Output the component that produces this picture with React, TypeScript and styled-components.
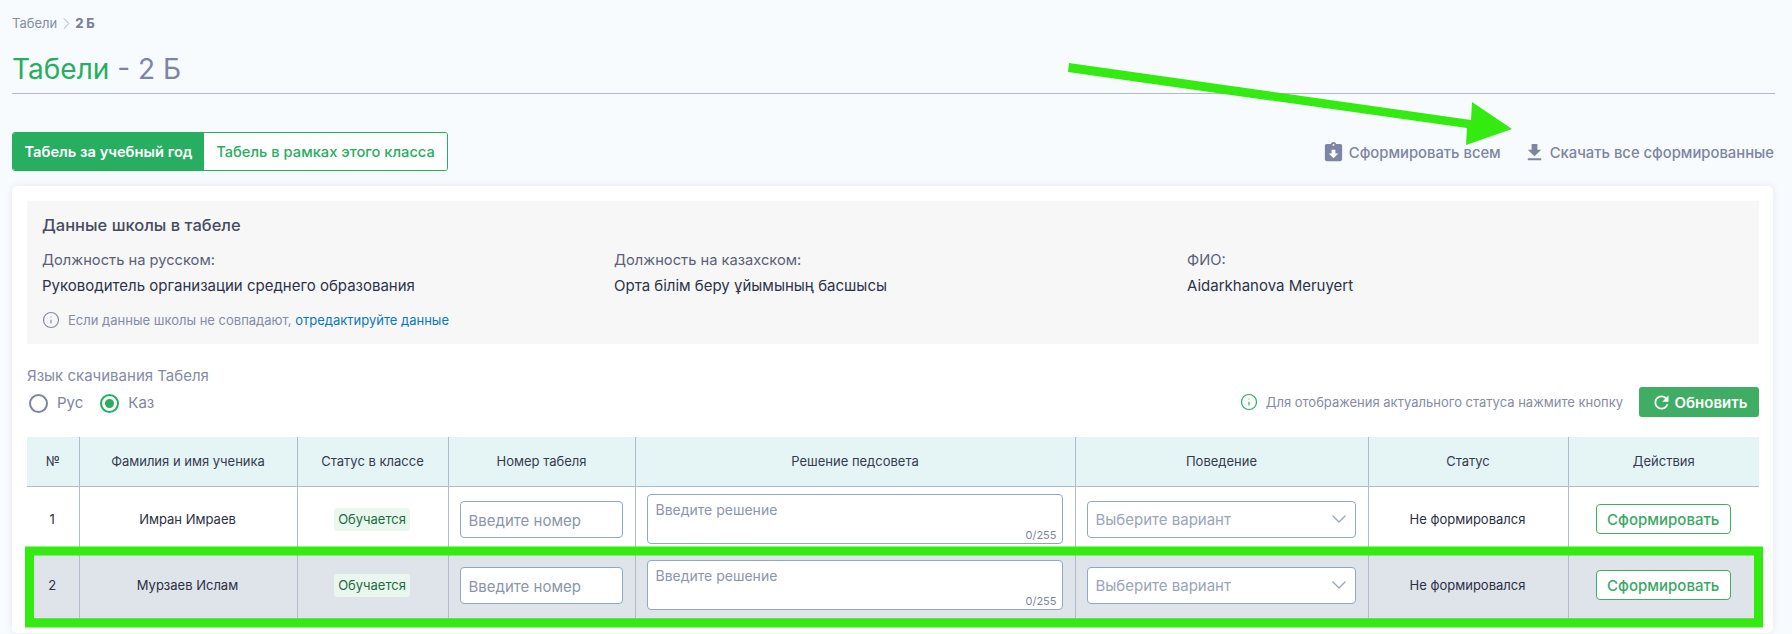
import React, { FC } from "react";
import styled, { createGlobalStyle } from "styled-components";
import { MdAssignmentReturned, MdFileDownload, MdRefresh } from "react-icons/md";
import { FiChevronDown, FiChevronRight, FiInfo } from "react-icons/fi";

const GlobalStyle = createGlobalStyle`
  * { box-sizing: border-box; }
  html, body { margin: 0; padding: 0; height: 634px; overflow: hidden; background: #f7fbfe; }
  body { font-family: Inter, "Noto Sans", sans-serif; color: #2b3044; }
`;

const Page = styled.div`
  position: relative;
  width: 1792px;
  height: 634px;
  padding: 16px 17px 0 12px;
  overflow: hidden;
`;

const Breadcrumbs = styled.div`
  display: flex;
  align-items: center;
  gap: 0;
  height: 14px;
  font-size: 13px;
  color: #858ba6;
  b { font-weight: 800; color: #7b819e; margin-left: -1px; }
`;

const Title = styled.h1`
  margin: 0;
  padding: 21px 0 0;
  height: 64px;
  border-bottom: 1px solid #b2b8c8;
  font-size: 28px;
  line-height: 36px;
  font-weight: 400;
  color: #7e84a3;
  span { color: #27ae60; }
`;

const Toolbar = styled.div`
  display: flex;
  align-items: center;
  justify-content: space-between;
  margin-top: 38px;
`;

const Tabs = styled.div`
  display: flex;
  width: 436px;
  height: 39px;
  border: 1px solid #27ae60;
  border-radius: 3px;
  overflow: hidden;
  background: #fff;
`;

const Tab = styled.div<{ $active?: boolean }>`
  display: flex;
  align-items: center;
  justify-content: center;
  flex: ${(p) => (p.$active ? "0 0 191px" : "1")};
  font-size: 14.7px;
  font-weight: ${(p) => (p.$active ? 600 : 500)};
  color: ${(p) => (p.$active ? "#fff" : "#27ae60")};
  background: ${(p) => (p.$active ? "#27ae60" : "#fff")};
`;

const Actions = styled.div`
  display: flex;
  align-items: center;
  gap: 22px;
  margin: 2px 1px 0 0;
`;

const ActionLink = styled.div`
  display: flex;
  align-items: center;
  gap: 4px;
  font-size: 14.8px;
  font-weight: 500;
  color: #7e84a3;
`;

const Card = styled.div`
  margin: 15px 2px 0 0;
  height: 447px;
  padding: 15px 14px 0 15px;
  background: #fff;
  border-radius: 5px;
  box-shadow: 0 0 6px rgba(126, 132, 163, 0.16);
`;

const SchoolBox = styled.div`
  height: 143px;
  padding: 13px 15px 0;
  background: #f7f7f7;
`;

const BoxTitle = styled.div`
  font-size: 16.5px;
  line-height: 22px;
  font-weight: 500;
  color: #474c62;
`;

const FieldGrid = styled.div`
  display: grid;
  grid-template-columns: 572px 573px 1fr;
  margin-top: 15px;
`;

const FieldLabel = styled.div`
  font-size: 14.7px;
  line-height: 18px;
  color: #5c6177;
`;

const FieldValue = styled.div`
  margin-top: 8px;
  font-size: 15px;
  line-height: 18px;
  color: #2d3348;
`;

const Hint = styled.div<{ $green?: boolean }>`
  display: flex;
  align-items: center;
  gap: 8px;
  font-size: 13px;
  line-height: 16px;
  color: #858ba6;
  svg { color: ${(p) => (p.$green ? "#27ae60" : "#858ba6")}; }
  a { color: #0a79bd; text-decoration: none; }
`;

const BoxHint = styled(Hint)`
  margin-top: 16px;
`;

const OptionsRow = styled.div`
  display: flex;
  justify-content: space-between;
  align-items: flex-end;
  margin-top: 23px;
`;

const LangLabel = styled.div`
  font-size: 15px;
  line-height: 18px;
  color: #858ba6;
`;

const RadioRow = styled.div`
  display: flex;
  gap: 17px;
  margin: 8px 0 0 2px;
`;

const RadioItem = styled.div`
  display: flex;
  align-items: center;
  gap: 9px;
  font-size: 15px;
  line-height: 20px;
  color: #7e84a3;
`;

const RadioMark = styled.span<{ $checked?: boolean }>`
  position: relative;
  width: 19px;
  height: 19px;
  border-radius: 50%;
  border: 2px solid ${(p) => (p.$checked ? "#27ae60" : "#7e84a3")};
  &::after {
    content: "";
    display: ${(p) => (p.$checked ? "block" : "none")};
    position: absolute;
    inset: 3px;
    border-radius: 50%;
    background: #27ae60;
  }
`;

const RefreshGroup = styled.div`
  display: flex;
  align-items: center;
  gap: 16px;
  margin-bottom: -4px;
`;

const RefreshButton = styled.button`
  display: flex;
  align-items: center;
  justify-content: center;
  gap: 3px;
  width: 120px;
  height: 30px;
  padding: 0;
  border: none;
  border-radius: 3px;
  background: #3fae64;
  color: #fff;
  font: 600 15px Inter, sans-serif;
`;

const Table = styled.table`
  width: 100%;
  margin-top: 24px;
  border-collapse: collapse;
  table-layout: fixed;
  font-size: 13px;
`;

const HeadCell = styled.th`
  height: 49px;
  padding: 0;
  background: #e5f5f5;
  border-left: 1px solid #b2bbcc;
  border-bottom: 1px solid #b2bbcc;
  font-weight: 400;
  color: #353a4f;
  &:first-child { border-left: none; }
`;

const Row = styled.tr<{ $shaded?: boolean }>`
  background: ${(p) => (p.$shaded ? "#dfe3ea" : "#fff")};
`;

const Cell = styled.td`
  height: 66px;
  padding: 0 12px 0 11px;
  text-align: center;
  border-left: 1px solid #b2bbcc;
  border-bottom: 1px solid #b2bbcc;
  color: #2b2f42;
  &:first-child { border-left: none; }
`;

const Badge = styled.span`
  display: inline-block;
  padding: 4px;
  border-radius: 3px;
  background: #e9f7ef;
  color: #1d6b3f;
  line-height: 15px;
`;

const fieldBase = `
  width: 100%;
  background: #fff;
  border: 1px solid #90a8c0;
  border-radius: 4px;
  color: #8c95ab;
  text-align: left;
`;

const NumberInput = styled.div`
  ${fieldBase}
  height: 37px;
  padding: 0 8px;
  font-size: 15px;
  line-height: 37px;
`;

const DecisionBox = styled.div`
  ${fieldBase}
  position: relative;
  height: 50px;
  padding: 7px 8px;
  font-size: 14px;
  line-height: 16px;
`;

const Counter = styled.span`
  position: absolute;
  right: 5px;
  bottom: 2px;
  font-size: 11px;
  line-height: 12px;
  color: #7e84a3;
`;

const SelectBox = styled.div`
  ${fieldBase}
  display: flex;
  align-items: center;
  justify-content: space-between;
  height: 37px;
  padding: 0 4px 0 8px;
  font-size: 15px;
  color: #9aa5b8;
`;

const FormButton = styled.button`
  width: 135px;
  height: 30px;
  padding: 0;
  background: #fff;
  border: 1px solid #3fae64;
  border-radius: 4px;
  color: #3aa864;
  font: 500 15px Inter, sans-serif;
`;

const Annotation = styled.svg`
  position: absolute;
  left: 0;
  top: 0;
  pointer-events: none;
`;

const columns = [
  { title: "№", width: 52 },
  { title: "Фамилия и имя ученика", width: 218 },
  { title: "Статус в классе", width: 151 },
  { title: "Номер табеля", width: 187 },
  { title: "Решение педсовета", width: 440 },
  { title: "Поведение", width: 293 },
  { title: "Статус", width: 200 },
  { title: "Действия" },
];

const students = ["Имран Имраев", "Мурзаев Ислам"];

const App: FC = () => (
  <Page>
    <GlobalStyle />
    <Breadcrumbs>
      Табели <FiChevronRight size={19} strokeWidth={1.2} color="#a5aec0" /> <b>2 Б</b>
    </Breadcrumbs>
    <Title>
      <span>Табели</span> - 2 Б
    </Title>
    <Toolbar>
      <Tabs>
        <Tab $active>Табель за учебный год</Tab>
        <Tab>Табель в рамках этого класса</Tab>
      </Tabs>
      <Actions>
        <ActionLink>
          <MdAssignmentReturned size={23} />
          Сформировать всем
        </ActionLink>
        <ActionLink>
          <MdFileDownload size={23} />
          Скачать все сформированные
        </ActionLink>
      </Actions>
    </Toolbar>
    <Card>
      <SchoolBox>
        <BoxTitle>Данные школы в табеле</BoxTitle>
        <FieldGrid>
          <div>
            <FieldLabel>Должность на русском:</FieldLabel>
            <FieldValue>Руководитель организации среднего образования</FieldValue>
          </div>
          <div>
            <FieldLabel>Должность на казахском:</FieldLabel>
            <FieldValue>Орта білім беру ұйымының басшысы</FieldValue>
          </div>
          <div>
            <FieldLabel>ФИО:</FieldLabel>
            <FieldValue>Aidarkhanova Meruyert</FieldValue>
          </div>
        </FieldGrid>
        <BoxHint>
          <FiInfo size={18} strokeWidth={1.6} />
          <span>
            Если данные школы не совпадают, <a href="#edit">отредактируйте данные</a>
          </span>
        </BoxHint>
      </SchoolBox>
      <OptionsRow>
        <div>
          <LangLabel>Язык скачивания Табеля</LangLabel>
          <RadioRow>
            <RadioItem>
              <RadioMark />
              Рус
            </RadioItem>
            <RadioItem>
              <RadioMark $checked />
              Каз
            </RadioItem>
          </RadioRow>
        </div>
        <RefreshGroup>
          <Hint $green>
            <FiInfo size={18} strokeWidth={1.6} />
            Для отображения актуального статуса нажмите кнопку
          </Hint>
          <RefreshButton>
            <MdRefresh size={21} />
            Обновить
          </RefreshButton>
        </RefreshGroup>
      </OptionsRow>
      <Table>
        <colgroup>
          {columns.map((c) => (
            <col key={c.title} style={c.width ? { width: c.width } : undefined} />
          ))}
        </colgroup>
        <thead>
          <tr>
            {columns.map((c) => (
              <HeadCell key={c.title}>{c.title}</HeadCell>
            ))}
          </tr>
        </thead>
        <tbody>
          {students.map((name, i) => (
            <Row key={name} $shaded={i === 1}>
              <Cell>{i + 1}</Cell>
              <Cell>{name}</Cell>
              <Cell>
                <Badge>Обучается</Badge>
              </Cell>
              <Cell>
                <NumberInput>Введите номер</NumberInput>
              </Cell>
              <Cell>
                <DecisionBox>
                  Введите решение
                  <Counter>0/255</Counter>
                </DecisionBox>
              </Cell>
              <Cell>
                <SelectBox>
                  Выберите вариант
                  <FiChevronDown size={24} strokeWidth={1.4} />
                </SelectBox>
              </Cell>
              <Cell>Не формировался</Cell>
              <Cell>
                <FormButton>Сформировать</FormButton>
              </Cell>
            </Row>
          ))}
        </tbody>
      </Table>
    </Card>
    <Annotation width="1792" height="634" viewBox="0 0 1792 634">
      <polygon points="1069,63 1471,120 1472,102 1512,129 1466,145 1467,128 1068,72" fill="#33ea11" />
      <rect x="29.5" y="551" width="1729" height="72" fill="none" stroke="#33ea11" strokeWidth="9" />
    </Annotation>
  </Page>
);

export default App;
